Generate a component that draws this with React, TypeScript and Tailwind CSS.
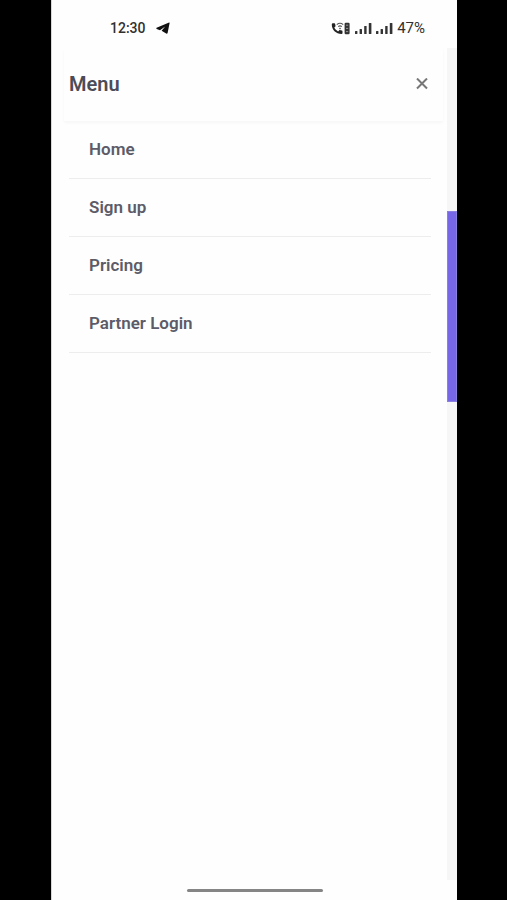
import React from 'react';

const menuItems = ['Home', 'Sign up', 'Pricing', 'Partner Login'];

const SignalIcon = () => (
  <svg className="h-3 w-[17px]" viewBox="0 0 17 12" fill="#333" aria-hidden="true">
    <rect x="0" y="9" width="2.4" height="3" rx="0.5" />
    <rect x="4.6" y="7" width="2.4" height="5" rx="0.5" />
    <rect x="9.2" y="4" width="2.4" height="8" rx="0.5" />
    <rect x="13.8" y="1" width="2.6" height="11" rx="0.5" />
  </svg>
);

const CallIcon = () => (
  <svg className="h-[13px] w-5" viewBox="0 0 20 13" fill="none" aria-hidden="true">
    <path
      d="M.8 2.2Q.9 1.3 1.8 1.3L3.4 1.3Q4 1.4 4.2 2.2L4.6 4.2 3.3 5.6C4.1 7.3 5.4 8.6 7.1 9.4L8.5 8.1 10.9 8.6Q11.5 8.8 11.5 9.4V11.1Q11.5 12 10.6 12C5 12 .6 7.6.8 2.2Z"
      fill="#222"
    />
    <path d="M5.8 2.6Q9 -.1 12.2 2.6M7.2 4.6Q9 3.1 10.8 4.6" stroke="#555" strokeWidth="1.1" />
    <path d="M9 5.4 10 6.4 9 7.4 8 6.4Z" fill="#555" />
    <rect x="13.6" y="0.8" width="5" height="11.4" rx="1.2" fill="#333" />
    <path d="M15 3.2h2.2M15 6.4h2.2M15 9.6h2.2" stroke="#999" strokeWidth="1" />
  </svg>
);

const StatusBar = () => (
  <div className="flex h-12 items-center justify-between pt-2 pr-8 pl-[58px] text-[#303030]">
    <div className="flex items-center gap-[10px]">
      <span className="text-[14px] font-medium">12:30</span>
      <svg className="h-3 w-[14px]" viewBox="0 0 14 12" fill="#111" aria-hidden="true">
        <path d="M13.1.6.6 5.8Q-.1 6.4.7 7L4 8.2 9.2 4.5 5.6 8.7 10.2 11.6Q11.3 12 11.6 10.9L13.6 1.1Q13.7.4 13.1.6Z" />
      </svg>
    </div>
    <div className="flex items-center gap-1">
      <CallIcon />
      <SignalIcon />
      <SignalIcon />
      <span className="text-[15px]">47%</span>
    </div>
  </div>
);

const App = () => {
  return (
    <div className="min-h-screen bg-black pr-[50px] pl-[51px] font-['Roboto',sans-serif]">
      <div className="flex min-h-screen flex-col border-l border-[#d8d8d8] bg-[#fefefe]">
        <StatusBar />

        <div className="flex flex-1">
          <div className="flex-1">
            <header className="mr-1 ml-3 flex h-[73px] items-center justify-between pr-[11px] pb-[2px] pl-[5px] shadow-[0_2px_3px_rgba(0,0,0,0.03)]">
              <h1 className="text-xl font-semibold text-[#4c4c58]">Menu</h1>
              <button type="button" aria-label="Close menu" className="p-1">
                <svg className="size-3" viewBox="0 0 12 12" aria-hidden="true">
                  <path d="M1 .5 11 10.5M11 .5 1 10.5" stroke="#777" strokeWidth="2" />
                </svg>
              </button>
            </header>

            <nav className="mr-4 ml-[17px]">
              <ul>
                {menuItems.map((item) => (
                  <li key={item} className="border-b border-[#ededed]">
                    <a href="#" className="flex h-[57px] items-center px-5 text-[17px] font-semibold text-[#5c5c69]">
                      {item}
                    </a>
                  </li>
                ))}
              </ul>
            </nav>
          </div>

          {/* sliver of the page behind the drawer */}
          <div className="w-[10px] bg-[#f6f6f7] pt-[163px]">
            <div className="h-[191px] border border-[#8b80df] bg-[#7567e8]"></div>
          </div>
        </div>

        <div className="flex h-5 items-center justify-center">
          <div className="h-[3px] w-[136px] rounded-full bg-[#858585]"></div>
        </div>
      </div>
    </div>
  );
};

export default App;
